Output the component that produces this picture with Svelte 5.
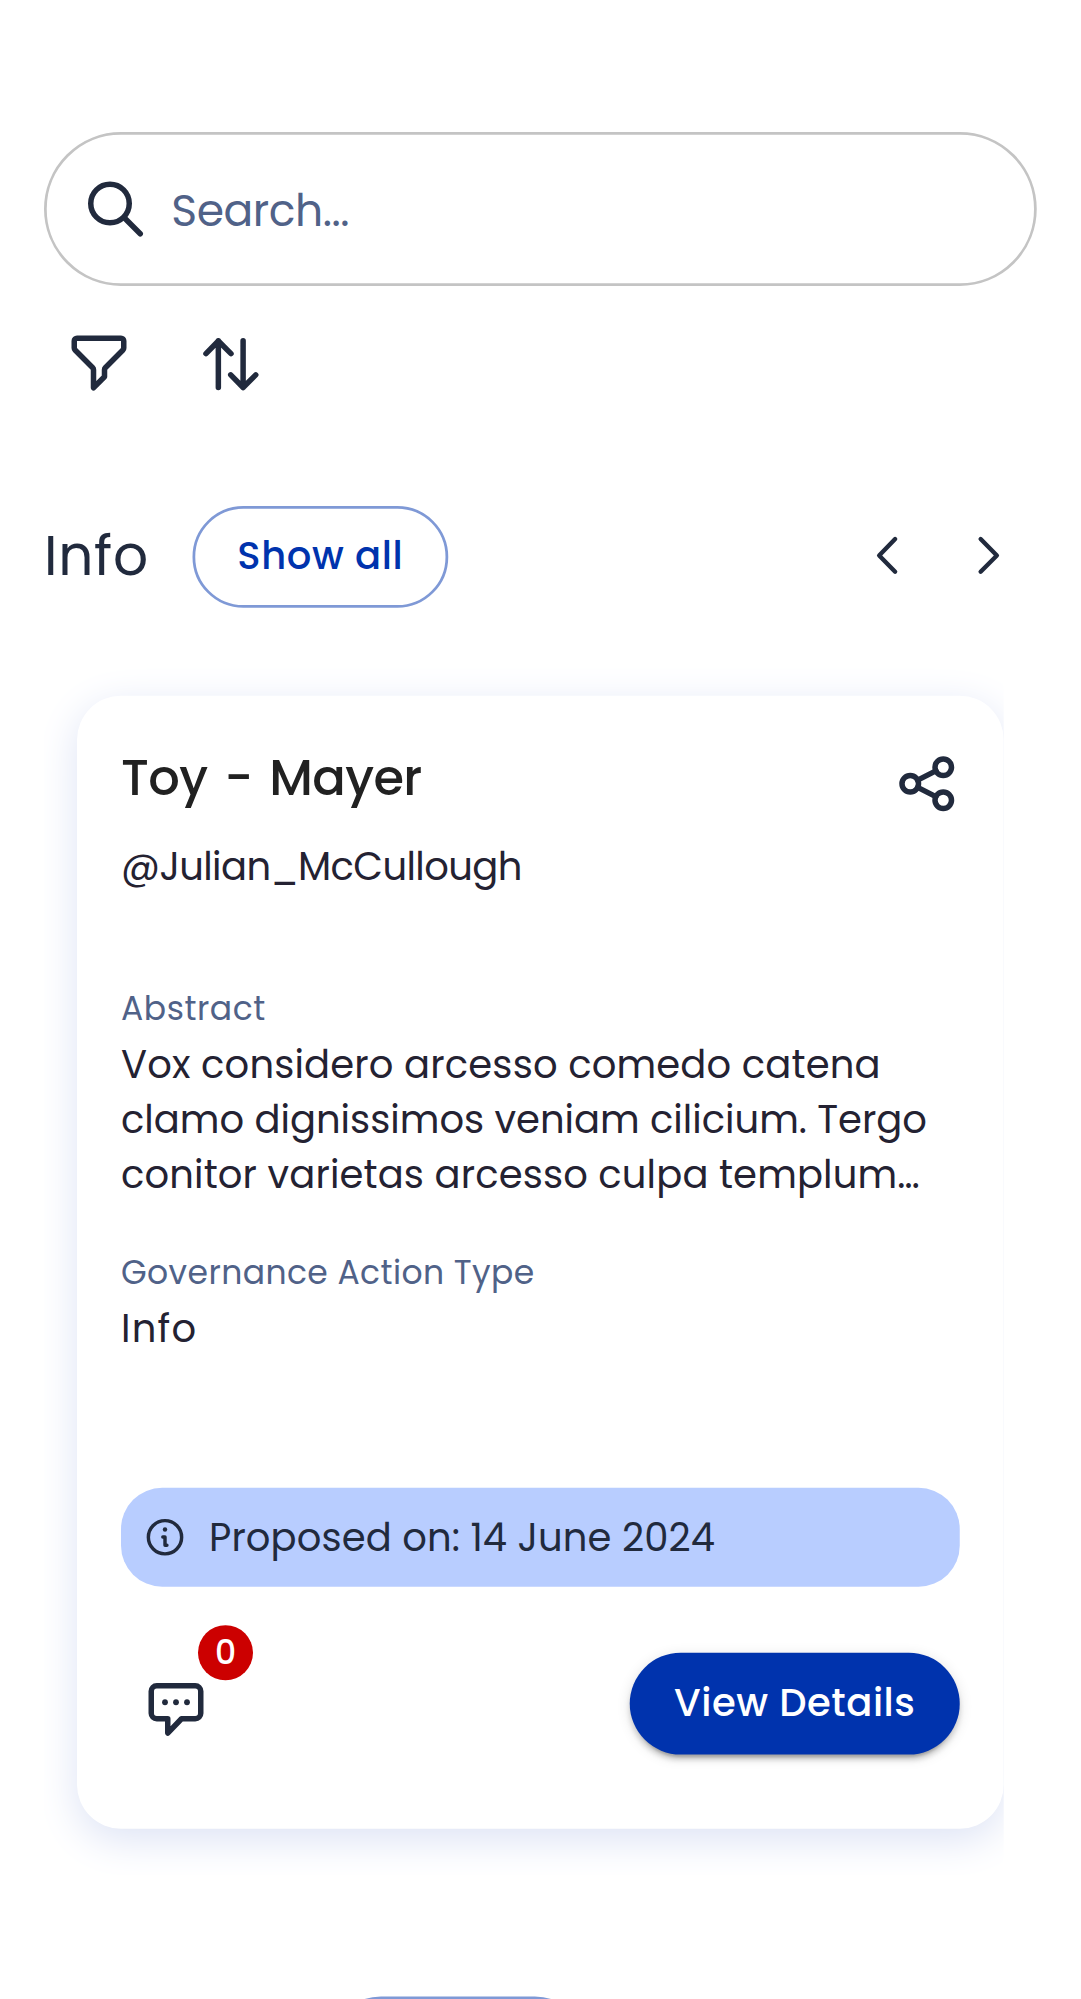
<script>
  const proposal = {
    title: 'Toy - Mayer',
    author: '@Julian_McCullough',
    abstract: ['Vox considero arcesso comedo catena', 'clamo dignissimos veniam cilicium. Tergo', 'conitor varietas arcesso culpa templum…'],
    type: 'Info',
    date: '14 June 2024',
    comments: 0
  };
</script>

<div class="viewport">
<main class="screen">
  <label class="search">
    <svg class="icon" viewBox="0 0 24 24"><circle cx="10" cy="10" r="7" /><path d="M15.2 15.2L21 21" /></svg>
    <input type="text" placeholder="Search..." />
  </label>

  <div class="tools">
    <button class="icon-button" aria-label="Filter">
      <svg class="icon" viewBox="0 0 24 24"><path d="M4 3h16a1 1 0 0 1 1 1v2.586a1 1 0 0 1-.293.707l-6.414 6.414a1 1 0 0 0-.293.707V17l-4 4v-6.586a1 1 0 0 0-.293-.707L3.293 7.293A1 1 0 0 1 3 6.586V4a1 1 0 0 1 1-1z" /></svg>
    </button>
    <button class="icon-button" aria-label="Sort">
      <svg class="icon" viewBox="0 0 24 24"><path d="M7.4 20.9V3.9M2.9 8.6L7.4 4L12 8.6M16.4 3.9V20.9M11.9 16.3L16.4 20.9L21 16.3" /></svg>
    </button>
  </div>

  <header class="section-head">
    <h2>Info</h2>
    <button class="outlined">Show all</button>
    <div class="arrows">
      <svg class="icon thin" viewBox="0 0 24 24"><path d="M14.5 6L8.7 12L14.5 17.9" /></svg>
      <svg class="icon thin" viewBox="0 0 24 24"><path d="M8.6 6L14.5 12L8.6 17.9" /></svg>
    </div>
  </header>

  <div class="carousel">
    <article class="card">
      <div class="card-head">
        <h3>{proposal.title}</h3>
        <svg class="icon share" viewBox="0 0 24 24"><circle cx="6" cy="12" r="3" /><circle cx="18" cy="6" r="3" /><circle cx="18" cy="18" r="3" /><path d="M8.7 10.7L15.3 7.3M8.7 13.3L15.3 16.7" /></svg>
      </div>
      <p class="author">{proposal.author}</p>

      <p class="label">Abstract</p>
      <p class="body abstract">
        {#each proposal.abstract as line}<span>{line}</span>{/each}
      </p>

      <p class="label second">Governance Action Type</p>
      <p class="body type">{proposal.type}</p>

      <div class="date">
        <svg viewBox="0 0 16 16"><circle cx="8" cy="8" r="6.05" /><path d="M7.2 7.9H8V10.9H8.7" /><circle class="dot" cx="8" cy="5.2" r=".8" /></svg>
        <span>Proposed on: {proposal.date}</span>
      </div>

      <footer>
        <button class="comments" aria-label="Comments">
          <svg class="icon" viewBox="0 0 24 24"><path d="M5 4H19A2 2 0 0 1 21 6V14A2 2 0 0 1 19 16H14L9 21.2V16H5A2 2 0 0 1 3 14V6A2 2 0 0 1 5 4z" /><g class="dots"><circle cx="8" cy="10" r="1.05" /><circle cx="12" cy="10" r="1.05" /><circle cx="16" cy="10" r="1.05" /></g></svg>
          <span class="badge">{proposal.comments}</span>
        </button>
        <button class="contained">View Details</button>
      </footer>
    </article>
  </div>

  <header class="section-head next">
    <button class="outlined" aria-label="Show all"></button>
  </header>
</main>
</div>

<style>
  :global(body) { background: #fff; }
  .viewport { width: 1081px; height: 1999px; overflow: hidden; }
  /* Laid out on a 393px phone grid and enlarged to the device's density. */
  .screen {
    width: 393px; height: 727px; box-sizing: border-box; padding: 48px 16px 0;
    transform: scale(2.75); transform-origin: 0 0;
    font-family: Poppins, Inter, sans-serif; color: #212a3d; background: #fff; font-kerning: none; text-rendering: optimizeSpeed;
  }
  .screen * { box-sizing: border-box; }
  h2, h3, p { margin: 0; font-weight: 400; }
  button { border: 0; background: none; padding: 0; font: inherit; color: inherit; }
  svg { display: block; flex: none; }
  .icon { width: 24px; height: 24px; fill: none; stroke: #212a3d; stroke-width: 2; stroke-linecap: round; stroke-linejoin: round; }
  .thin { stroke-width: 1.6; }

  .search { display: flex; align-items: center; gap: 8px; width: 361px; height: 56px; padding: 0 13px; border: 1px solid #c4c4c4; border-radius: 28px; }
  .search input { flex: 1; min-width: 0; border: 0; padding: 1px 0 0 .3px; outline: 0; background: none; font: 400 16px/24px Poppins, Inter, sans-serif; letter-spacing: -.17px; }
  .search input::placeholder { color: #506288; opacity: 1; }

  .tools { display: flex; gap: 8px; margin-top: 8px; }
  .icon-button { display: grid; place-items: center; width: 40px; height: 40px; }

  .section-head { display: flex; align-items: center; height: 37px; margin-top: 32px; }
  h2 { width: 54px; font-size: 20px; line-height: 30px; margin-top: -1px; letter-spacing: .25px; }
  .outlined { width: 93px; height: 37px; border: 1px solid #7f99d6; border-radius: 18.5px; color: #0033ad; font-size: 14px; font-weight: 500; letter-spacing: .23px; }
  .arrows { display: flex; gap: 13px; margin: 0 5px 1px auto; }

  .carousel { width: 349px; height: 461px; overflow: hidden; padding: 32px 0 0 12px; }
  .card { width: 337px; height: 412px; padding: 16px; border-radius: 16px; background: #fff; box-shadow: 0 4px 15px #dde3f5; }
  .card-head { display: flex; justify-content: space-between; height: 36px; }
  h3 { font-size: 18px; line-height: 27px; font-weight: 500; color: #212121; letter-spacing: -.22px; word-spacing: 1.6px; }
  .share { margin-top: 4px; }
  .author { font-size: 14px; line-height: 20px; color: #242232; letter-spacing: -.22px; }
  .label { margin-top: 33px; font-size: 12px; line-height: 18px; color: #506288; letter-spacing: .2px; }
  .body { margin-top: 1px; font-size: 14px; line-height: 20px; color: #242232; }
  .body span { display: block; white-space: nowrap; }
  .abstract span:nth-child(1) { letter-spacing: .06px; }
  .abstract span:nth-child(3) { letter-spacing: .05px; }
  .type { letter-spacing: .45px; }
  .label.second { margin-top: 17px; letter-spacing: .15px; }

  .date { display: flex; align-items: center; gap: 8px; height: 36px; margin-top: 48px; padding: 0 8px; border-radius: 15px; background: #b8cdff; font-size: 14px; line-height: 20px; letter-spacing: .04px; }
  .date svg { width: 16px; height: 16px; fill: none; stroke: #212a3d; stroke-width: 1.25; stroke-linecap: round; stroke-linejoin: round; }
  .date .dot { fill: #212a3d; stroke: none; }

  footer { display: flex; justify-content: space-between; height: 48px; margin-top: 24px; align-items: flex-start; }
  .comments { position: relative; width: 40px; height: 40px; padding: 8px; }
  .comments .dots { fill: #212a3d; stroke: none; }
  .badge { position: absolute; left: 28px; top: -10px; width: 20px; height: 20px; border-radius: 10px; background: #c00; color: #fff; font-size: 12px; line-height: 20px; font-weight: 500; text-align: center; }
  .contained { width: 120px; height: 37px; border-radius: 18.5px; background: #0033ad; color: #fff; font-size: 14px; font-weight: 500; letter-spacing: .2px; box-shadow: 0 3px 1px -2px rgba(0,0,0,.2), 0 2px 2px rgba(0,0,0,.14), 0 1px 5px rgba(0,0,0,.12); }
  .next { margin-top: 44px; padding-left: 104px; }
</style>
